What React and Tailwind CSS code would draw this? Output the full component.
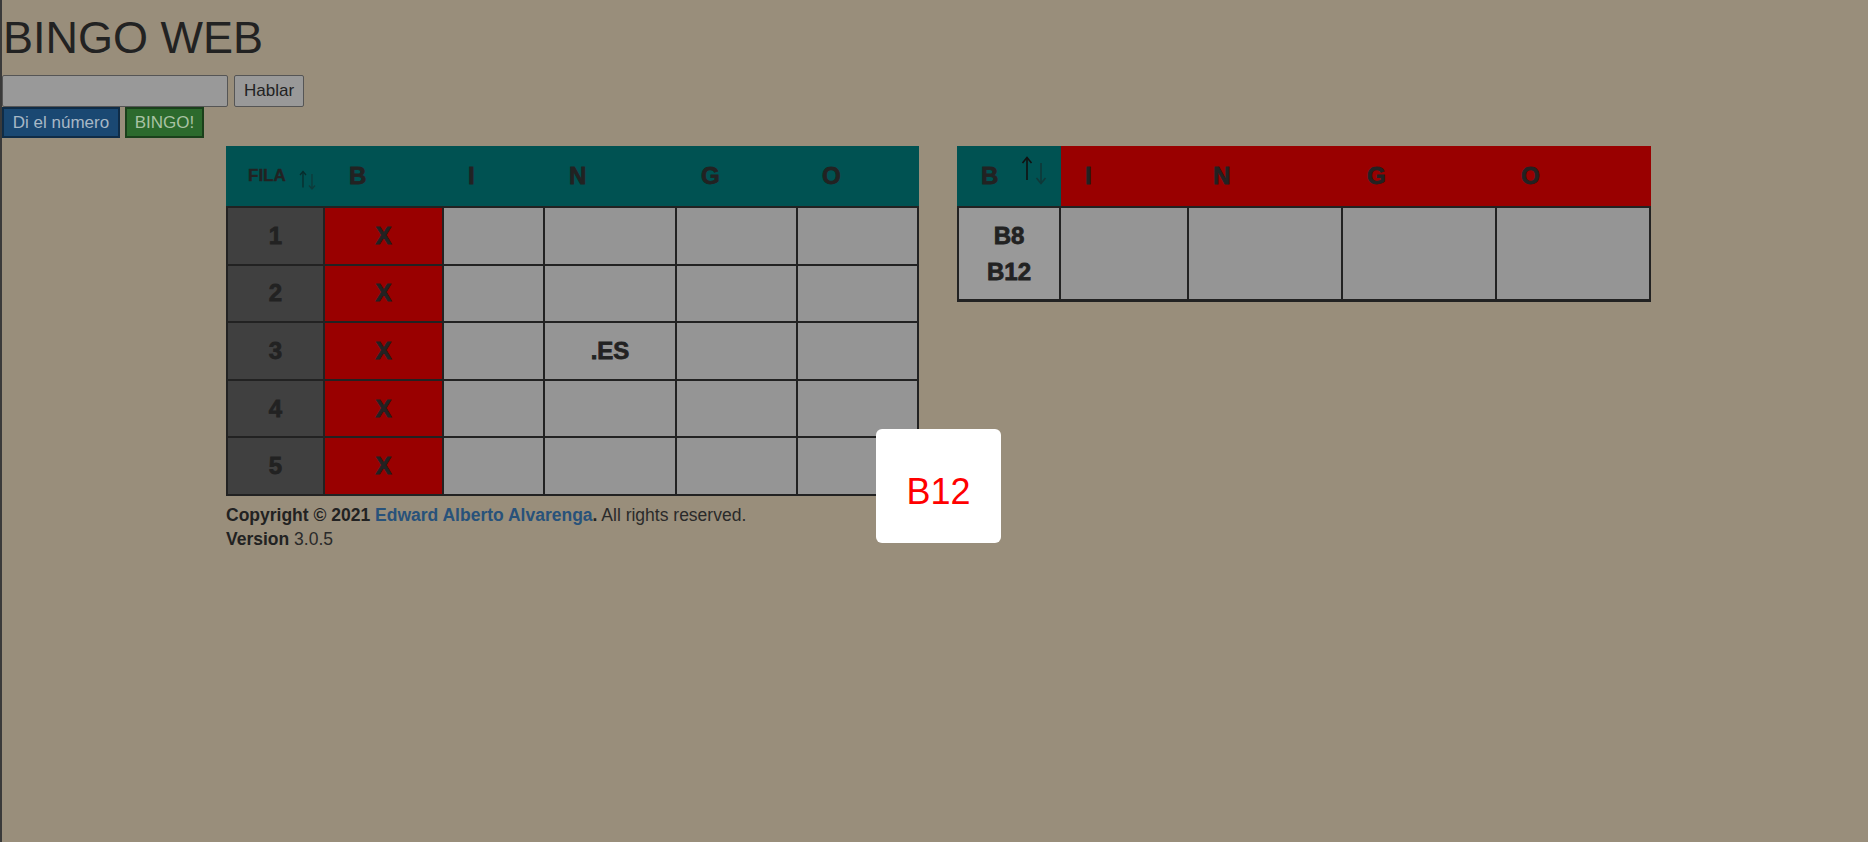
import React from "react";

function SortArrows({ big }) {
  if (big) {
    return (
      <svg width="28" height="30" viewBox="0 0 28 30" className="mb-[12px]">
        <g fill="none" strokeWidth="1.6">
          <path d="M7 3 L7 25" stroke="#111" />
          <path d="M2.5 8 L7 2.5 L11.5 8" stroke="#111" />
          <path d="M21 8 L21 28" stroke="#0f3838" />
          <path d="M16.5 23 L21 28.5 L25.5 23" stroke="#0f3838" />
        </g>
      </svg>
    );
  }
  return (
    <svg width="20" height="20" viewBox="0 0 20 20" className="mt-[8px]">
      <g fill="none" strokeWidth="1.3">
        <path d="M5 1.5 L5 17.5" stroke="#082c2c" />
        <path d="M2 5 L5 1.5 L8 5" stroke="#082c2c" />
        <path d="M14 4 L14 19" stroke="#0f3a3a" />
        <path d="M11 15.5 L14 19 L17 15.5" stroke="#0f3a3a" />
      </g>
    </svg>
  );
}

const heavy = "font-bold [-webkit-text-stroke:0.8px_#222]";

const mainCols = [99, 119, 101, 132, 121, 121];
const rows = [
  ["1", "X", "", "", "", ""],
  ["2", "X", "", "", "", ""],
  ["3", "X", "", ".ES", "", ""],
  ["4", "X", "", "", "", ""],
  ["5", "X", "", "", "", ""],
];

function MainTable() {
  return (
    <div className="w-[693px] shrink-0">
      <div className={"flex h-[60px] bg-[#005252] text-[#222] " + heavy}>
        <div className="w-[99px] flex items-center justify-between pl-[22px] pr-[7px]">
          <span className="text-[17px] [-webkit-text-stroke:0.4px_#222]">FILA</span>
          <SortArrows />
        </div>
        {["B", "I", "N", "G", "O"].map((l, i) => (
          <div
            key={l}
            className="flex items-center pl-[24px] text-[24px]"
            style={{ width: mainCols[i + 1] }}
          >
            {l}
          </div>
        ))}
      </div>
      <div className="border-t-2 border-l-2 border-[#222]">
        {rows.map((r, ri) => (
          <div key={ri} className="flex">
            {r.map((c, ci) => (
              <div
                key={ci}
                className={
                  "h-[57.6px] border-r-2 border-b-2 border-[#222] flex items-center justify-center text-[24px] text-[#222] " +
                  heavy +
                  " " +
                  (ci === 0 ? "bg-[#404040]" : ci === 1 ? "bg-[#990000]" : "bg-[#959595]")
                }
                style={{ width: mainCols[ci] - (ci === 0 ? 2 : 0) }}
              >
                {c}
              </div>
            ))}
          </div>
        ))}
      </div>
      <div className="mt-[7px] text-[17.5px] leading-[24px] text-[#222]">
        <div>
          <span className="font-bold">Copyright © 2021 </span>
          <span className="font-bold text-[#28527a]">Edward Alberto Alvarenga</span>
          <span className="font-bold">.</span>
          <span className="text-[#2a2a2a]"> All rights reserved.</span>
        </div>
        <div>
          <span className="font-bold">Version</span>
          <span className="text-[#2a2a2a]"> 3.0.5</span>
        </div>
      </div>
    </div>
  );
}

const sideCols = [104, 128, 154, 154, 154];

function SideTable() {
  return (
    <div className="w-[694px] shrink-0">
      <div className={"flex h-[60px] text-[#222] text-[24px] " + heavy}>
        <div className="w-[104px] bg-[#005252] flex items-center justify-between pl-[24px] pr-[13px]">
          <span>B</span>
          <SortArrows big />
        </div>
        <div className="flex-1 flex bg-[#990000]">
          {["I", "N", "G", "O"].map((l, i) => (
            <div key={l} className="flex items-center pl-[24px]" style={{ width: sideCols[i + 1] }}>
              {l}
            </div>
          ))}
        </div>
      </div>
      <div className="flex border-t-2 border-l-2 border-b-[3px] border-[#222]">
        <div
          className={
            "w-[102px] h-[91px] bg-[#999999] border-r-2 border-[#222] flex flex-col items-center justify-center text-[24px] leading-[36px] text-[#222] " +
            heavy
          }
        >
          <span>B8</span>
          <span>B12</span>
        </div>
        {sideCols.slice(1).map((w, i) => (
          <div key={i} className="h-[91px] bg-[#959595] border-r-2 border-[#222]" style={{ width: w }} />
        ))}
      </div>
    </div>
  );
}

export default function App() {
  return (
    <div
      className="min-h-screen w-full bg-[#998e7b] border-l-2 border-[#3a3a3a] relative text-[#222]"
      style={{ fontFamily: '"Liberation Sans", Arial, sans-serif' }}
    >
      <h1 className="pt-[15px] pl-px text-[45px] leading-none text-[#222] mb-[15px]">BINGO WEB</h1>
      <div className="flex gap-[6px]">
        <input className="w-[226px] h-[32px] bg-[#999999] border border-[#555] rounded-[2px] outline-none" />
        <button className="h-[32px] px-[9px] bg-[#999999] border border-[#555] rounded-[2px] text-[17px] text-[#222]">
          Hablar
        </button>
      </div>
      <div className="flex gap-[5px]">
        <button className="h-[31px] w-[118px] bg-[#1a4872] border-2 border-[#0f2c47] text-[17px] text-[#a8b8c6]">
          Di el número
        </button>
        <button className="h-[31px] w-[79px] bg-[#2c6a2d] border-2 border-[#1a401b] text-[17px] text-[#a9c2a4]">
          BINGO!
        </button>
      </div>
      <div className="flex gap-[38px] pl-[224px] mt-[8px] items-start">
        <MainTable />
        <SideTable />
      </div>

      <div className="absolute left-[874px] top-[429px] w-[125px] h-[114px] bg-white rounded-[6px] flex items-center justify-center pt-[12px]">
        <span className="text-[36px] text-[#ff0000]">B12</span>
      </div>
    </div>
  );
}
